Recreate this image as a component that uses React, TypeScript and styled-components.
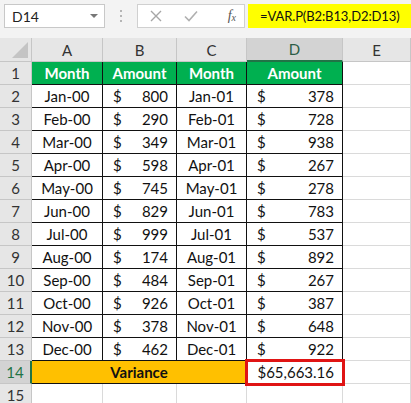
import React from "react";
import styled, { createGlobalStyle } from "styled-components";

const GlobalStyle = createGlobalStyle`
  html, body {
    margin: 0;
    padding: 0;
    background: #ffffff;
  }
  body {
    font-family: Lato, "Liberation Sans", sans-serif;
  }
`;

const rows: [string, number, string, number][] = [
  ["Jan-00", 800, "Jan-01", 378],
  ["Feb-00", 290, "Feb-01", 728],
  ["Mar-00", 349, "Mar-01", 938],
  ["Apr-00", 598, "Apr-01", 267],
  ["May-00", 745, "May-01", 278],
  ["Jun-00", 829, "Jun-01", 783],
  ["Jul-00", 999, "Jul-01", 537],
  ["Aug-00", 174, "Aug-01", 892],
  ["Sep-00", 484, "Sep-01", 267],
  ["Oct-00", 926, "Oct-01", 387],
  ["Nov-00", 378, "Nov-01", 648],
  ["Dec-00", 462, "Dec-01", 922],
];

const App = () => {
  return (
    <>
      <GlobalStyle />
      <Page>
        <FormulaBar>
          <NameBox>
            D14
            <Caret />
          </NameBox>
          <Grip>
            <i />
            <i />
            <i />
          </Grip>
          <ButtonBox>
            <svg width="12" height="12" viewBox="0 0 12 12">
              <path d="M1 1 L11 11 M11 1 L1 11" stroke="#a6a6a6" strokeWidth="1.4" />
            </svg>
            <svg width="14" height="12" viewBox="0 0 14 12">
              <path d="M1 6.5 L5 10.5 L13 1.5" stroke="#b0b0b0" strokeWidth="1.6" fill="none" />
            </svg>
            <Fx>
              f<sub>x</sub>
            </Fx>
          </ButtonBox>
          <FormulaInput>=VAR.P(B2:B13,D2:D13)</FormulaInput>
        </FormulaBar>

        <Grid>
          <Corner>
            <svg width="16" height="16" viewBox="0 0 16 16">
              <path d="M16 0 L16 16 L0 16 Z" fill="#c4c4c4" />
            </svg>
          </Corner>
          {["A", "B", "C", "D", "E"].map((c) => (
            <ColHead key={c} $selected={c === "D"}>
              {c}
            </ColHead>
          ))}

          <RowHead>1</RowHead>
          <TitleCell>Month</TitleCell>
          <TitleCell>Amount</TitleCell>
          <TitleCell>Month</TitleCell>
          <TitleCell>Amount</TitleCell>
          <Empty />

          {rows.map(([m1, a1, m2, a2], i) => (
            <React.Fragment key={m1}>
              <RowHead>{i + 2}</RowHead>
              <DataCell>{m1}</DataCell>
              <MoneyCell>
                <span>$</span>
                <span>{a1}</span>
              </MoneyCell>
              <DataCell>{m2}</DataCell>
              <MoneyCell>
                <span>$</span>
                <span>{a2}</span>
              </MoneyCell>
              <Empty />
            </React.Fragment>
          ))}

          <RowHead $selected>14</RowHead>
          <VarianceCell>Variance</VarianceCell>
          <ResultCell>$65,663.16</ResultCell>
          <Empty />

          <RowHead>15</RowHead>
          <Empty />
          <Empty />
          <Empty />
          <Empty />
          <Empty />
        </Grid>
      </Page>
    </>
  );
};

export default App;

const Page = styled.div`
  width: 411px;
  height: 403px;
  overflow: hidden;
  background: #ffffff;
`;

const FormulaBar = styled.div`
  height: 38px;
  background: #f3f3f3;
  display: flex;
  align-items: flex-start;
  padding-top: 4px;
  padding-left: 4px;
  box-sizing: border-box;
`;

const NameBox = styled.div`
  flex-shrink: 0;
  width: 101px;
  height: 24px;
  box-sizing: border-box;
  background: #ffffff;
  border: 1px solid #c8c8c8;
  display: flex;
  align-items: center;
  justify-content: space-between;
  padding: 0 6px 0 7px;
  font-size: 14px;
  color: #222;
`;

const Caret = styled.span`
  width: 0;
  height: 0;
  border-left: 4px solid transparent;
  border-right: 4px solid transparent;
  border-top: 4px solid #777;
`;

const Grip = styled.div`
  flex-shrink: 0;
  width: 32px;
  height: 24px;
  display: flex;
  flex-direction: column;
  align-items: center;
  justify-content: center;
  gap: 3px;
  i {
    display: block;
    width: 2px;
    height: 2px;
    background: #b5b5b5;
  }
`;

const ButtonBox = styled.div`
  flex-shrink: 0;
  width: 108px;
  height: 24px;
  box-sizing: border-box;
  background: #ffffff;
  border: 1px solid #d0d0d0;
  display: flex;
  align-items: center;
  padding: 0 8px 0 12px;
  gap: 22px;
`;

const Fx = styled.span`
  margin-left: auto;
  font-family: "Liberation Serif", serif;
  font-style: italic;
  font-size: 14px;
  color: #555;
  sub {
    font-size: 10px;
    vertical-align: -1px;
  }
`;

const FormulaInput = styled.div`
  margin-left: 3px;
  flex: 1;
  min-width: 0;
  height: 24px;
  background: #ffff00;
  display: flex;
  align-items: center;
  padding-left: 12px;
  font-size: 13px;
  letter-spacing: -0.1px;
  color: #111;
  white-space: nowrap;
`;

const Grid = styled.div`
  display: grid;
  grid-template-columns: 32px 71px 74px 70px 96px 68px;
  grid-template-rows: 24px repeat(14, 23px) 23px;
  font-size: 15px;
  color: #111;
`;

const Corner = styled.div`
  background: #e6e6e6;
  border-right: 1px solid #c6c6c6;
  border-bottom: 1px solid #c6c6c6;
  display: flex;
  align-items: flex-end;
  justify-content: flex-end;
  padding: 0 3px 3px 0;
`;

const ColHead = styled.div<{ $selected?: boolean }>`
  background: ${(p) => (p.$selected ? "#d3d3d3" : "#e6e6e6")};
  color: ${(p) => (p.$selected ? "#2b5d45" : "#333")};
  border-right: 1px solid #c6c6c6;
  border-bottom: ${(p) => (p.$selected ? "2px solid #217346" : "1px solid #c6c6c6")};
  display: flex;
  align-items: center;
  justify-content: center;
  font-size: 15px;
`;

const RowHead = styled.div<{ $selected?: boolean }>`
  background: ${(p) => (p.$selected ? "#d3d3d3" : "#e6e6e6")};
  color: ${(p) => (p.$selected ? "#217346" : "#333")};
  border-right: ${(p) => (p.$selected ? "2px solid #217346" : "1px solid #c6c6c6")};
  border-bottom: 1px solid #c6c6c6;
  display: flex;
  align-items: center;
  justify-content: center;
  font-size: 15px;
`;

const Empty = styled.div`
  border-right: 1px solid #dadada;
  border-bottom: 1px solid #dadada;
`;

const TableCell = styled.div`
  border-right: 1px solid #111;
  border-bottom: 1px solid #111;
  display: flex;
  align-items: center;
  white-space: nowrap;
`;

const TitleCell = styled(TableCell)`
  background: #00b050;
  color: #ffffff;
  font-weight: 700;
  justify-content: center;
`;

const DataCell = styled(TableCell)`
  justify-content: center;
`;

const MoneyCell = styled(TableCell)`
  justify-content: space-between;
  padding: 0 8px 0 10px;
`;

const VarianceCell = styled(TableCell)`
  grid-column: span 3;
  background: #ffc000;
  font-weight: 700;
  justify-content: center;
`;

const ResultCell = styled(TableCell)`
  justify-content: flex-end;
  padding-right: 8px;
  outline: 3px solid #e01414;
  outline-offset: -1px;
  position: relative;
  z-index: 1;
`;
